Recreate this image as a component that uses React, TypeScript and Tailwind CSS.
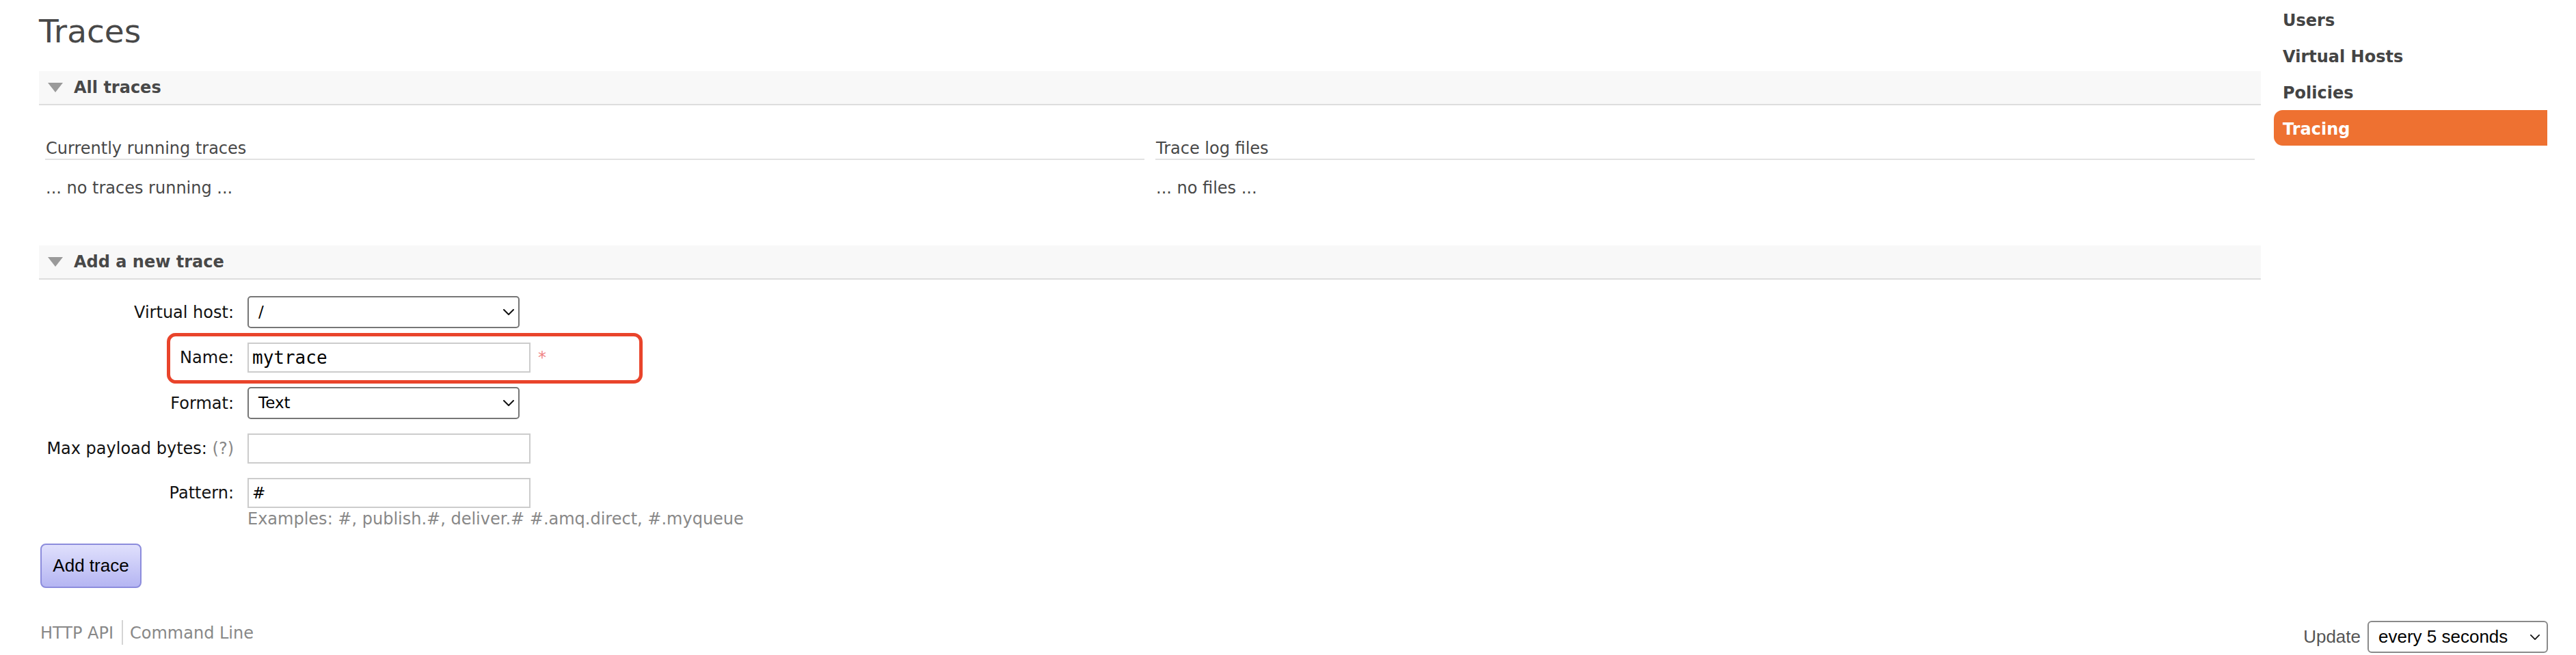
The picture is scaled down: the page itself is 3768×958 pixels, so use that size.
import { ReactNode } from 'react';

const sans = "font-['DejaVu_Sans',Verdana,sans-serif]";
const arial = "font-['Liberation_Sans',Arial,sans-serif]";

function Chevron({ className }: { className?: string }) {
  return (
    <svg className={className} viewBox="0 0 16 9" fill="none" aria-hidden>
      <path d="M1 1l7 7 7-7" stroke="#111" strokeWidth="2" strokeLinecap="round" strokeLinejoin="round" />
    </svg>
  );
}

function SectionHeader({ title }: { title: string }) {
  return (
    <div className="flex h-[50px] items-center border-b-2 border-[#dddddd] bg-[#f8f8f8] pl-[13px]">
      <svg className="h-[14px] w-[22px]" viewBox="0 0 22 14" aria-hidden>
        <polygon points="0,0 22,0 11,14" fill="#9a9a9a" />
      </svg>
      <h2 className="ml-[16px] text-[24px] font-bold leading-[48px] text-[#484848]">{title}</h2>
    </div>
  );
}

function Select({ value, width = 'w-[398px]' }: { value: string; width?: string }) {
  return (
    <div className={`relative h-[47px] ${width}`}>
      <div className="flex h-full items-center rounded-[5px] border-2 border-[#767676] bg-white pl-[14px] text-[23px] text-black">
        {value}
      </div>
      <Chevron className="pointer-events-none absolute right-[8px] top-[19px] h-[9px] w-[16px]" />
    </div>
  );
}

function TextInput({ value, mono }: { value?: string; mono?: boolean }) {
  return (
    <div
      className={`flex h-[44px] w-[414px] items-center border-2 border-[#cccccc] bg-white px-[5px] text-black ${
        mono ? "font-['DejaVu_Sans_Mono',monospace] text-[26px]" : 'text-[23px]'
      }`}
    >
      {value}
    </div>
  );
}

function Row({ label, children }: { label: ReactNode; children: ReactNode }) {
  return (
    <div className="flex items-center gap-[20px]">
      <div className="w-[285px] text-right text-[24px] leading-[30px] text-[#111]">{label}</div>
      {children}
    </div>
  );
}

const navItems = ['Users', 'Virtual Hosts', 'Policies', 'Tracing'];

export default function App() {
  return (
    <div className={`flex min-h-[958px] w-[3768px] flex-col bg-white ${sans}`}>
      <div className="flex">
        <main className="ml-[57px] w-[3250px]">
          <h1 className="mt-[22px] text-[47px] font-normal leading-[47px] text-[#484848]">Traces</h1>

          <section className="mt-[35px]">
            <SectionHeader title="All traces" />
            <div className="grid grid-cols-2 gap-x-[16px] px-[9px] text-[24px] leading-[30px] text-[#484848]">
              <div>
                <div className="mt-[48px] border-b-2 border-[#e2e2e2] pl-[1px]">Currently running traces</div>
                <p className="mt-[26px] pl-[1px]">... no traces running ...</p>
              </div>
              <div>
                <div className="mt-[48px] border-b-2 border-[#e2e2e2] pl-[1px]">Trace log files</div>
                <p className="mt-[26px] pl-[1px]">... no files ...</p>
              </div>
            </div>
          </section>

          <section className="mt-[69px]">
            <SectionHeader title="Add a new trace" />
            <div className="relative mt-[24px] flex flex-col gap-[21px]">
              <Row label="Virtual host:">
                <Select value="/" />
              </Row>
              <Row label="Name:">
                <TextInput value="mytrace" mono />
                <span className="ml-[-9px] text-[24px] leading-[30px] text-[#f08484]">*</span>
              </Row>
              <Row label="Format:">
                <Select value="Text" />
              </Row>
              <Row
                label={
                  <>
                    Max payload bytes: <span className="text-[#888888]">(?)</span>
                  </>
                }
              >
                <TextInput />
              </Row>
              <div className="flex items-start gap-[20px]">
                <div className="w-[285px] text-right text-[24px] leading-[44px] text-[#111]">Pattern:</div>
                <div className="flex flex-col">
                  <TextInput value="#" />
                  <p className="mt-[2px] text-[24px] leading-[28px] text-[#888888]">
                    Examples: #, publish.#, deliver.# #.amq.direct, #.myqueue
                  </p>
                </div>
              </div>
              <div className="pointer-events-none absolute left-[187px] top-[54px] h-[74px] w-[696px] rounded-[13px] border-[5px] border-[#e9442b]" />
            </div>

            <button
              className={`mt-[22px] ml-[2px] h-[65px] w-[148px] rounded-[8px] border-2 border-[#8c8cdc] bg-linear-to-b from-[#e0e0fc] to-[#b5b5f2] text-[26px] text-black ${arial}`}
            >
              Add trace
            </button>
          </section>
        </main>

        <nav className="ml-[19px] mt-[2px] flex w-[400px] flex-col gap-[1px]">
          {navItems.map((item) => (
            <div
              key={item}
              className={`h-[52px] rounded-l-[13px] pl-[13px] pt-[2px] text-[24px] font-bold leading-[52px] ${
                item === 'Tracing' ? 'bg-[#ee7131] text-white' : 'text-[#444444]'
              }`}
            >
              {item}
            </div>
          ))}
        </nav>
      </div>

      <footer className="mt-[48px] flex items-start justify-between pl-[59px] pr-[41px]">
        <div className="mt-[-1px] flex h-[36px] items-stretch text-[24px] leading-[36px] text-[#888888]">
          <span className="pr-[12px] pt-[1px]">HTTP API</span>
          <span className="w-[2px] bg-[#d4d4d4]" />
          <span className="pl-[10px] pt-[1px]">Command Line</span>
        </div>
        <div className={`flex items-center gap-[10px] ${arial}`}>
          <span className="text-[26px] text-[#555555]">Update</span>
          <div className="relative h-[47px] w-[264px]">
            <div className="flex h-full items-center rounded-[6px] border-2 border-[#8a8a8a] bg-white pl-[14px] text-[26px] text-black">
              every 5 seconds
            </div>
            <Chevron className="pointer-events-none absolute right-[12px] top-[20px] h-[8px] w-[14px]" />
          </div>
        </div>
      </footer>
    </div>
  );
}
